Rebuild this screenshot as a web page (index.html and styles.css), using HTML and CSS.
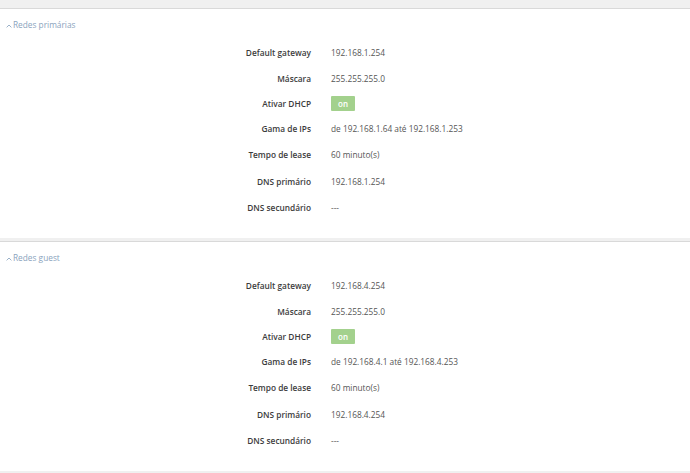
FILE: index.html
```html
<!DOCTYPE html>
<html lang="pt">
<head>
<meta charset="utf-8">
<link rel="stylesheet" href="styles.css">
</head>
<body>
<section class="panel">
  <div class="panel-head"><svg class="caret" width="6" height="4" viewBox="0 0 6 4"><path d="M0.6 3.4 L3 1 L5.4 3.4" fill="none" stroke="#8ea8c2" stroke-width="0.9"/></svg>Redes primárias</div>
  <dl class="fields">
    <dt>Default gateway</dt><dd>192.168.1.254</dd>
    <dt>Máscara</dt><dd>255.255.255.0</dd>
    <dt>Ativar DHCP</dt><dd><span class="toggle">on</span></dd>
    <dt>Gama de IPs</dt><dd>de 192.168.1.64 até 192.168.1.253</dd>
    <dt>Tempo de lease</dt><dd>60 minuto(s)</dd>
    <dt>DNS primário</dt><dd>192.168.1.254</dd>
    <dt>DNS secundário</dt><dd>---</dd>
  </dl>
</section>
<section class="panel">
  <div class="panel-head"><svg class="caret" width="6" height="4" viewBox="0 0 6 4"><path d="M0.6 3.4 L3 1 L5.4 3.4" fill="none" stroke="#8ea8c2" stroke-width="0.9"/></svg>Redes guest</div>
  <dl class="fields">
    <dt>Default gateway</dt><dd>192.168.4.254</dd>
    <dt>Máscara</dt><dd>255.255.255.0</dd>
    <dt>Ativar DHCP</dt><dd><span class="toggle">on</span></dd>
    <dt>Gama de IPs</dt><dd>de 192.168.4.1 até 192.168.4.253</dd>
    <dt>Tempo de lease</dt><dd>60 minuto(s)</dd>
    <dt>DNS primário</dt><dd>192.168.4.254</dd>
    <dt>DNS secundário</dt><dd>---</dd>
  </dl>
</section>
</body>
</html>
```
FILE: styles.css
```css
html, body {
  margin: 0;
  padding: 0;
}
body {
  background: #f0f0f0;
  padding-top: 8px;
  font-family: "Open Sans", "Noto Sans", sans-serif;
  font-size: 8.3px;
  color: #555;
}
.panel {
  background: #fff;
  border-top: 1px solid #d9d9d9;
  height: 229px;
  margin-bottom: 3px;
  box-sizing: content-box;
}
.panel-head {
  padding: 9px 0 0 6px;
  height: 14px;
  line-height: 14px;
  color: #8aa3bd;
  font-size: 8.3px;
  display: flex;
  align-items: center;
}
.caret {
  display: block;
  margin-right: 1px;
  margin-top: 1px;
}
.fields {
  margin: 7px 0 0 0;
  display: grid;
  grid-template-columns: 311px 1fr;
  grid-template-rows: 26px 26px 25px 25px 27px 26px 26px;
  column-gap: 20px;
  align-items: center;
}
.fields dt {
  text-align: right;
  font-weight: 600;
  color: #3c3c3c;
}
.fields dd {
  margin: 0;
  color: #555;
}
.toggle {
  display: block;
  width: 24px;
  height: 15px;
  line-height: 15px;
  text-align: center;
  background: #a3d18d;
  color: #fff;
  font-size: 8px;
  font-weight: 600;
  border-radius: 1px;
}
```
